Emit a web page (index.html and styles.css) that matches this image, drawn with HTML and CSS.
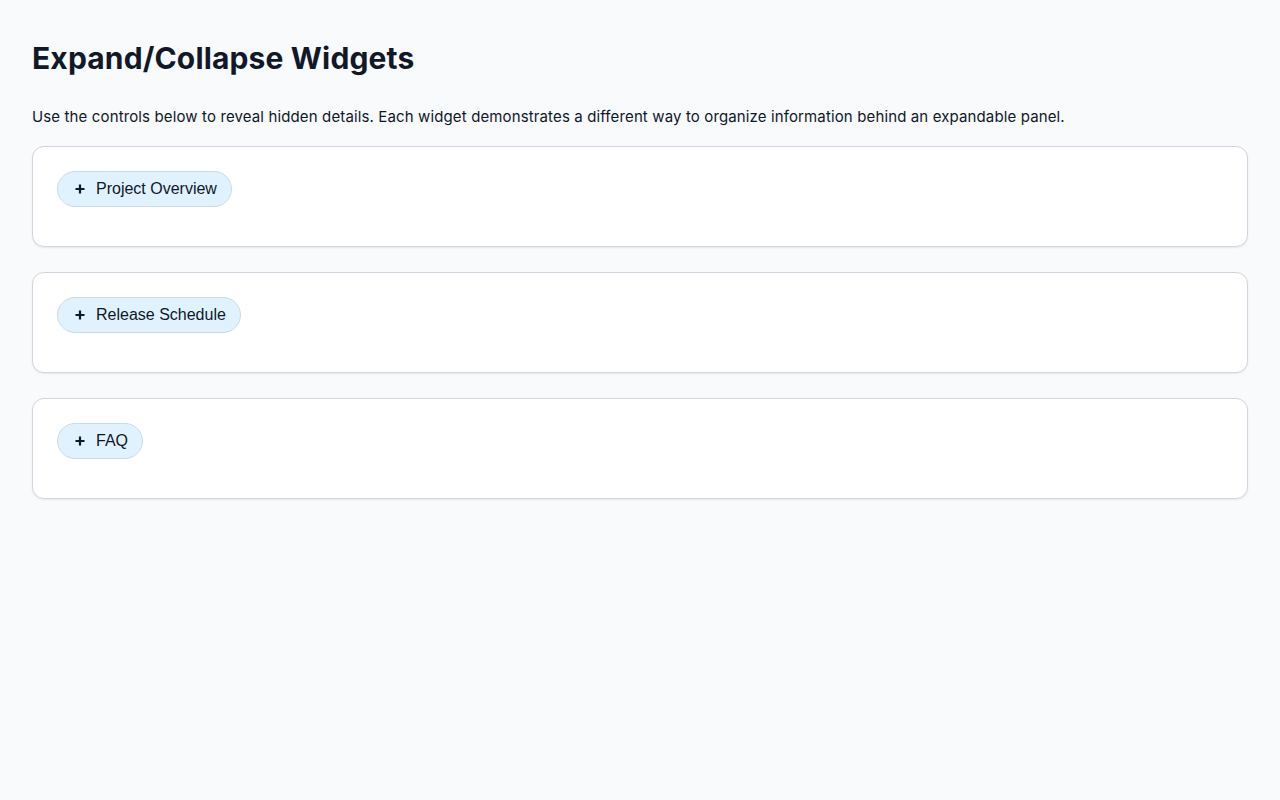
FILE: index.html
```html
<!DOCTYPE html>
<html>
<head>
  <meta charset="utf-8">
  <title>Expand/Collapse Widgets</title>
  <!-- Page styles -->
  <link rel="stylesheet" href="styles.css">
</head>

<body>

  <h1 class="title">Expand/Collapse Widgets</h1>
  <p class="intro">Use the controls below to reveal hidden details. Each widget demonstrates a different way to organize information behind an expandable panel.</p>

  <!-- Widget 1 -->
  <section class="widget">
    <button class="toggle" onclick="toggle(this)">
      <svg class="icon" viewBox="0 0 16 16"><path d="M8 3.5v9M3.5 8h9"/></svg>
      <span>Project Overview</span>
    </button>
    <div class="panel" hidden>
      <p>The project aims to build a small library of reusable widgets.</p>
    </div>
  </section>

  <!-- Widget 2 -->
  <section class="widget">
    <button class="toggle" onclick="toggle(this)">
      <svg class="icon" viewBox="0 0 16 16"><path d="M8 3.5v9M3.5 8h9"/></svg>
      <span>Release Schedule</span>
    </button>
    <div class="panel" hidden>
      <p>Alpha in spring, beta in summer, stable release in autumn.</p>
    </div>
  </section>

  <!-- Widget 3 -->
  <section class="widget">
    <button class="toggle" onclick="toggle(this)">
      <svg class="icon" viewBox="0 0 16 16"><path d="M8 3.5v9M3.5 8h9"/></svg>
      <span>FAQ</span>
    </button>
    <div class="panel" hidden>
      <p>Click a heading to open or close its panel.</p>
    </div>
  </section>

  <script>
    // Show or hide the panel that follows the clicked button
    function toggle(button) {
      const panel = button.nextElementSibling;
      panel.hidden = !panel.hidden;
      button.querySelector('path').setAttribute('d', panel.hidden ? 'M8 3.5v9M3.5 8h9' : 'M3.5 8h9');
    }
  </script>

</body>
</html>
```

FILE: styles.css
```css
/* Page */
body {
  margin: 0;
  padding: 32px;
  background: #f8fafc;
  color: #0f172a;
  font-family: Inter, "Noto Sans", sans-serif;
}

/* Heading */
.title {
  margin: 8px 0 29px;
  font-size: 30px;
  line-height: 36px;
  font-weight: 700;
  letter-spacing: 0.15px;
  color: #111827;
}

/* Intro text */
.intro {
  margin: 0 0 17px;
  font-size: 15px;
  line-height: 24px;
  letter-spacing: 0.13px;
}

/* One expandable card */
.widget {
  background: #fff;
  border: 1px solid #d4d4e0;
  border-radius: 12px;
  box-shadow: 0 1px 2px rgba(15, 23, 42, 0.08);
  padding: 24px 24px 39px;
  margin-bottom: 25px;
}

/* Pill button that opens a card */
.toggle {
  display: inline-flex;
  align-items: center;
  gap: 8px;
  height: 36px;
  padding: 0 14px;
  border: 1px solid #c9dbe9;
  border-radius: 999px;
  background: #e0f2fe;
  color: #0f172a;
  font-family: "Liberation Sans", Arial, sans-serif;
  font-size: 16px;
  cursor: pointer;
}

.icon {
  width: 16px;
  height: 16px;
  fill: none;
  stroke: #0f172a;
  stroke-width: 2.2;
}

/* Hidden details */
.panel {
  margin-top: 16px;
  font-size: 15px;
}
```
